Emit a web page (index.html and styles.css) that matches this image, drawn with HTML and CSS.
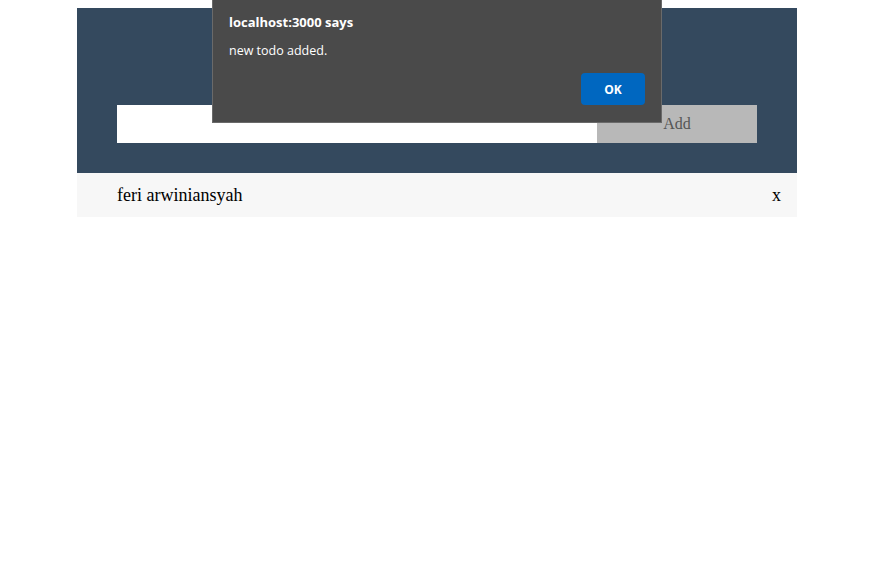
FILE: index.html
```html
<!DOCTYPE html>
<html>
<head>
<meta charset="utf-8">
<link rel="stylesheet" href="styles.css">
</head>
<body>
<div class="app">
  <div class="header">
    <div class="form-row">
      <input class="todo-input" type="text">
      <span class="add-btn">Add</span>
    </div>
  </div>
  <ul class="list">
    <li class="item"><span class="item-text">feri arwiniansyah</span><span class="close">x</span></li>
  </ul>
</div>
<div class="dialog">
  <div class="dialog-title">localhost:3000 says</div>
  <div class="dialog-msg">new todo added.</div>
  <div class="dialog-actions"><span class="ok-btn">OK</span></div>
</div>
</body>
</html>
```
FILE: styles.css
```css
body {
  margin: 8px;
  font-family: "Liberation Serif", serif;
  background: #fff;
}
.app {
  width: 720px;
  margin: 0 0 0 69px;
}
.header {
  background: #34495e;
  height: 165px;
  padding: 97px 40px 0;
  box-sizing: border-box;
}
.form-row {
  display: flex;
  height: 38px;
}
.todo-input {
  width: 480px;
  height: 38px;
  border: none;
  margin: 0;
  padding: 0;
  box-sizing: border-box;
  background: #fff;
  outline: none;
}
.add-btn {
  width: 160px;
  height: 38px;
  background: #b8b8b8;
  color: #555;
  font-size: 16px;
  display: flex;
  align-items: center;
  justify-content: center;
}
.list {
  list-style: none;
  margin: 0;
  padding: 0;
}
.item {
  background: #f7f7f7;
  height: 44px;
  display: flex;
  align-items: center;
  justify-content: space-between;
  padding: 0 16px 0 40px;
  font-size: 18px;
  color: #000;
}
.dialog {
  position: absolute;
  left: 212px;
  top: -1px;
  width: 450px;
  height: 124px;
  background: #4a4a4a;
  border: 1px solid #6a6a6a;
  font-family: "Open Sans", "Noto Sans", sans-serif;
  color: #fff;
  padding: 0 16px 0 16px;
  box-sizing: border-box;
}
.dialog-title {
  font-weight: bold;
  font-size: 13px;
  margin-top: 13px;
  line-height: 18px;
}
.dialog-msg {
  font-size: 12.5px;
  margin-top: 11px;
  line-height: 18px;
}
.dialog-actions {
  display: flex;
  justify-content: flex-end;
  margin-top: 13px;
}
.ok-btn {
  width: 64px;
  height: 32px;
  background: #0067c0;
  border-radius: 4px;
  color: #fff;
  font-size: 12px;
  font-weight: bold;
  display: flex;
  align-items: center;
  justify-content: center;
}
```
